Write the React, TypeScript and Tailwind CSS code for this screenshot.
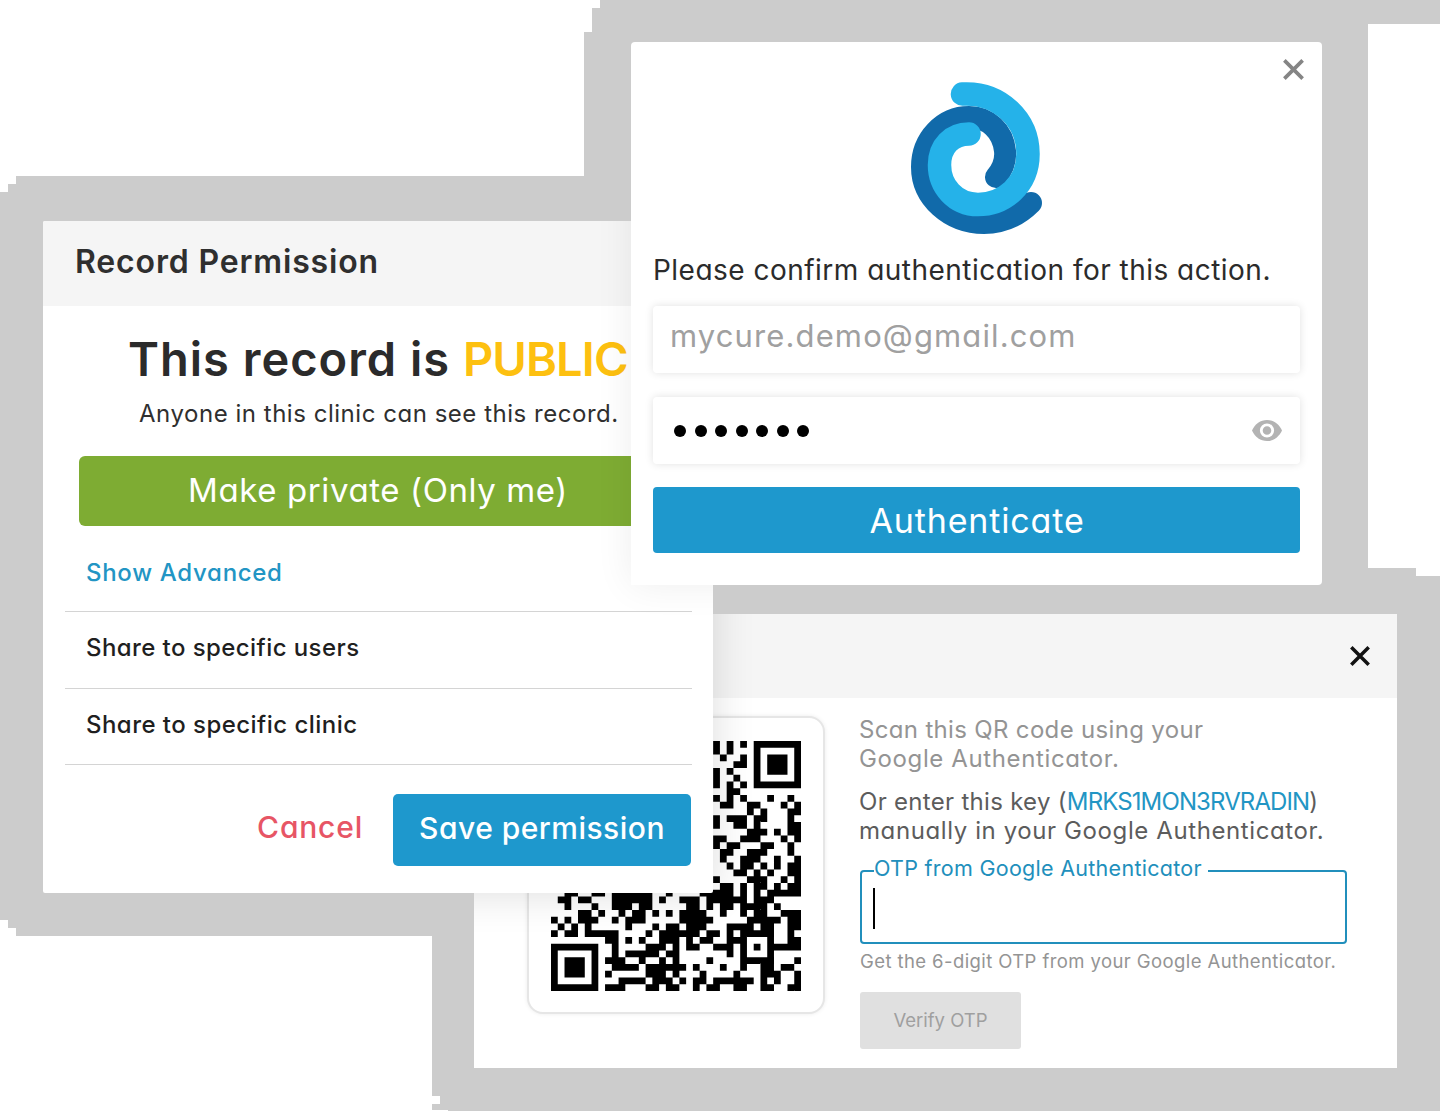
import React from "react";

const QR_TOP_RIGHT = [
  "#.#.#.#######",
  "#.#...#.....#",
  ".#..#.#.###.#",
  "...##.#.###.#",
  "#.#...#.###.#",
  "#..#..#.....#",
  "#.#.#.#######",
  "..##.........",
  "#.#.#...#..#.",
  ".##..##...#.#",
  ".....#.#...##",
  "#.###.##...#.",
  "#..##.#....##",
  ".....###.#.##",
  "##..###...#.#",
  "#.##...##..#.",
  ".##..###...#.",
  ".#..###..#..#",
  "..#.##.#.#.##",
  "...##.#.#..##",
  "#....###..#.#",
  ".##.#.##.#.##",
];

const QR_BOTTOM = [
  "..##..##.######..#....#####.#.#.#####",
  ".##.##...######.#..###.######.###....",
  "..#...#..###.##.....##.#.##.####.#...",
  "....##.#..#.##.#.#.####..#..#.##..###",
  "#.#.###..#.###.....#####.....#####.##",
  ".#.#.#.....#...#.##.###...####.##..##",
  "#.##.#####....#.######.##.#.#####..#.",
  "........##.#.#..###.#.##..###...#..##",
  "#######..#....###.#.##..###.#.#.#####",
  "#.....#..#.#####.##.......#.#...#....",
  "#.###.#.###..#..#.#....#....#####...#",
  "#.###.#..####.######.#...#..#..##.##.",
  "#.###.#.#.....###.#...#....#...###..#",
  "#.....#...####.###.#.##.######.#.#..#",
  "#######.###...##.##..#.##..##..##..##",
];

const modules = [...QR_TOP_RIGHT.map((r) => ".".repeat(24) + r), ...QR_BOTTOM];

function QrCode() {
  const d = modules
    .flatMap((row, y) => [...row].map((c, x) => (c === "#" ? `M${x} ${y}h1v1h-1z` : "")))
    .join("");
  return (
    <svg viewBox="0 0 37 37" className="h-[250px] w-[250px]">
      <path d={d} fill="#000" />
    </svg>
  );
}

function Cross({ className }: { className: string }) {
  return (
    <svg viewBox="0 0 20 20" className={className} fill="none" stroke="currentColor" strokeWidth="3.5">
      <path d="M1.300 1.300L18.700 18.700M18.700 1.300L1.300 18.700" />
    </svg>
  );
}

function Logo() {
  return (
    <svg viewBox="0 0 180 190" className="h-[190px] w-[180px]" fill="none" strokeLinecap="round">
      <path d="M106 117C113 109 116 101 115 91C113 71 98 57 79 57C53 57 32 79 32 107C32 138 60 163 94 163C112 163 128 156 141 143" stroke="#116aaa" strokeWidth="22" />
      <path d="M72.500 34C110 32 138 60 138 94C138 125 114 144.500 88 144.500C65 144.500 49.500 126 49.500 105C49.500 86 62 74 79 74" stroke="#25b2e9" strokeWidth="23.500" />
    </svg>
  );
}

function OtpDialog() {
  return (
    <section className="absolute left-[474px] top-[614px] h-[454px] w-[923px] overflow-hidden bg-white">
      <header className="flex h-[84px] items-center justify-end bg-[#f5f5f5] pr-[27px]">
        <Cross className="h-[20px] w-[20px] text-[#111]" />
      </header>
      <div className="flex">
        <div className="ml-[53px] mt-[18px] flex h-[298px] w-[298px] shrink-0 items-center justify-center rounded-[16px] border-2 border-[#e6e6e6] bg-white pr-px pt-[2px] shadow-[0_0_4px_rgba(0,0,0,0.08)]">
          <QrCode />
        </div>
        <div className="ml-[34px] mt-[18px] w-[500px] whitespace-nowrap">
          <p className="text-[24px] leading-[28.5px] tracking-[0.33px] text-[#949494]">
            Scan this QR code using your
            <br />
            <span className="tracking-[0.62px]">Google Authenticator.</span>
          </p>
          <p className="mt-[14px] text-[24px] leading-[29px] tracking-[0.3px] text-[#5c5c5c]">
            Or enter this key (<span className="tracking-[-0.88px] text-[#2295c4]">MRKS1MON3RVRADIN</span>)
            <br />
            <span className="tracking-[0.6px]">manually in your Google Authenticator.</span>
          </p>
          <div className="relative ml-px mt-[25px] h-[74px] w-[487px] rounded-[4px] border-2 border-[#218fbc]">
            <span className="absolute left-[12px] top-[-19px] bg-white pr-[6px] text-[21.5px] leading-[30px] tracking-[0.28px] text-[#218fbc]">
              OTP from Google Authenticator
            </span>
            <span className="absolute left-[11px] top-[16px] h-[41px] w-[2px] bg-black" />
          </div>
          <p className="ml-px mt-[3px] text-[18.5px] leading-[28px] tracking-[0.41px] text-[#949494]">
            Get the 6-digit OTP from your Google Authenticator.
          </p>
          <button className="ml-px mt-[17px] h-[57px] w-[161px] rounded-[3px] bg-[#e0e0e0] pt-px text-[18.5px] text-[#9f9f9f]">
            Verify OTP
          </button>
        </div>
      </div>
      <div className="pointer-events-none absolute left-[-431px] top-[-393px] h-[672px] w-[670px] shadow-[0_0_40px_rgba(0,0,0,0.14)]" />
    </section>
  );
}

function PermissionDialog() {
  return (
    <section className="absolute left-[43px] top-[221px] h-[672px] w-[670px] overflow-hidden whitespace-nowrap rounded-[2px] bg-white">
      <header className="flex h-[85px] items-center bg-[#f5f5f5] pb-[3px] pl-[32px]">
        <h2 className="text-[32px] font-semibold leading-[40px] tracking-[0.84px] text-[#2f2f2f]">Record Permission</h2>
      </header>
      <h1 className="ml-[85px] mt-[23px] text-[47px] font-semibold leading-[60px] tracking-[1px] text-[#2b2b2b]">
        This record is <span className="tracking-[-0.9px] text-[#fdc010]">PUBLIC</span>
      </h1>
      <p className="ml-[96px] mt-[9px] text-[24px] leading-[32px] tracking-[0.53px] text-[#2f2f2f]">
        Anyone in this clinic can see this record.
      </p>
      <button className="ml-[36px] mt-[26px] block h-[70px] w-[598px] rounded-[6px] bg-[#7eac33] text-[33px] tracking-[0.6px] text-white">
        Make private (Only me)
      </button>
      <div className="mx-[21px] ml-[22px] mt-[8px] h-[78px] border-b border-[#d4d4d4] pl-[21px] text-[24px] font-medium leading-[77px] tracking-[0.7px] text-[#2295c4]">
        Show Advanced
      </div>
      <div className="ml-[22px] mr-[21px] h-[77px] border-b border-[#d4d4d4] pl-[21px] text-[24px] font-medium leading-[72px] tracking-[0.42px] text-[#1f1f1f]">
        Share to specific users
      </div>
      <div className="ml-[22px] mr-[21px] h-[76px] border-b border-[#d4d4d4] pl-[21px] text-[24px] font-medium leading-[72px] tracking-[0.46px] text-[#1f1f1f]">
        Share to specific clinic
      </div>
      <div className="mr-[22px] mt-[29px] flex items-center justify-end">
        <button className="mr-[30px] pb-[6px] text-[30px] font-medium tracking-[0.8px] text-[#e75565]">Cancel</button>
        <button className="h-[72px] w-[298px] rounded-[5px] bg-[#1e98cd] pb-[4px] text-[30px] font-medium tracking-[0.48px] text-white">
          Save permission
        </button>
      </div>
      <div className="pointer-events-none absolute left-[588px] top-[-179px] h-[543px] w-[691px] shadow-[0_0_36px_rgba(0,0,0,0.07)]" />
    </section>
  );
}

function AuthDialog() {
  return (
    <section className="absolute left-[631px] top-[42px] h-[543px] w-[691px] whitespace-nowrap rounded-[4px] bg-white px-[22px]">
      <Cross className="absolute right-[18px] top-[17px] h-[21px] w-[21px] text-[#858585]" />
      <div className="ml-[237px] pt-[18px]">
        <Logo />
      </div>
      <p className="text-[28px] leading-[40px] tracking-[0.48px] text-[#2b2b2b]">
        Please confirm authentication for this action.
      </p>
      <div className="mt-[16px] h-[67px] rounded-[4px] bg-white pl-[17px] text-[31px] leading-[60px] tracking-[1.12px] text-[#a0a0a0] shadow-[0_0_8px_rgba(0,0,0,0.12)]">
        mycure.demo@gmail.com
      </div>
      <div className="mt-[24px] flex h-[67px] items-center justify-between rounded-[4px] bg-white pl-[21px] pr-[18px] shadow-[0_0_8px_rgba(0,0,0,0.12)]">
        <div className="flex gap-[8.5px]">
          {Array.from({ length: 7 }, (_, i) => (
            <span key={i} className="h-[12px] w-[12px] rounded-full bg-black" />
          ))}
        </div>
        <svg viewBox="0 0 30 21" className="h-[21px] w-[30px]">
          <path d="M0 10.500C3 4 8.500 0 15 0S27 4 30 10.500C27 17 21.500 21 15 21S3 17 0 10.500Z" fill="#b3b3b3" />
          <circle cx="15" cy="10.500" r="5.700" fill="#b3b3b3" stroke="#fff" strokeWidth="2.800" />
        </svg>
      </div>
      <button className="mt-[23px] block h-[66px] w-[647px] rounded-[4px] bg-[#1e98cd] pl-px text-[34px] tracking-[0.85px] text-white">
        Authenticate
      </button>
    </section>
  );
}

export default function App() {
  return (
    <main className="relative h-[1111px] w-[1440px] overflow-hidden bg-white font-[Inter,sans-serif] [font-feature-settings:'cv11']">
      <div className="absolute inset-0 bg-[#ccc] [clip-path:polygon(600px_0,1440px_0,1440px_24px,1368px_24px,1368px_568px,1416px_568px,1416px_576px,1440px_576px,1440px_1111px,448px_1111px,448px_1110px,432px_1110px,432px_1104px,440px_1104px,440px_1096px,432px_1096px,432px_936px,16px_936px,16px_928px,8px_928px,8px_920px,0_920px,0_192px,8px_192px,8px_184px,16px_184px,16px_176px,584px_176px,584px_32px,592px_32px,592px_8px,600px_8px)]" />
      <OtpDialog />
      <PermissionDialog />
      <AuthDialog />
    </main>
  );
}
